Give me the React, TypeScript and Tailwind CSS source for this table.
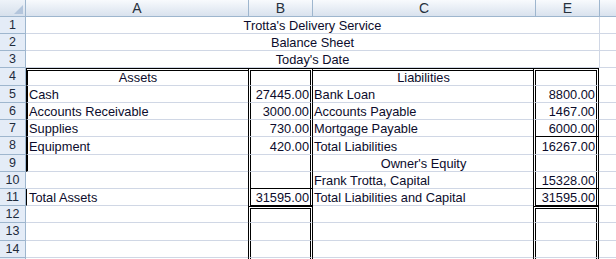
import React from "react";

const GB = "border-b border-b-[#d0d7e5]";
const BK = "border-b border-b-black";

function RowHead({ n }: { n?: number }) {
  return (
    <div className="w-[26px] shrink-0 h-full flex items-center justify-center bg-[#e4ecf7] border-r border-b border-[#9eb6ce] text-[12.5px] leading-none text-[#1e2b3c]">
      {n}
    </div>
  );
}

const base = "shrink-0 h-full flex items-end overflow-hidden whitespace-nowrap leading-[14px]";

function A({ cls, children }: { cls: string; children?: React.ReactNode }) {
  return <div className={`${base} w-[222px] ${cls}`}>{children}</div>;
}
function B({ cls, children }: { cls: string; children?: React.ReactNode }) {
  return (
    <div className={`${base} w-[65px] justify-end pr-[1px] border-double border-x-[3px] border-x-black ${cls}`}>
      {children}
    </div>
  );
}
function C({ cls, children }: { cls: string; children?: React.ReactNode }) {
  return <div className={`${base} w-[220px] pl-[1px] ${cls}`}>{children}</div>;
}
function E({ cls, children }: { cls: string; children?: React.ReactNode }) {
  return (
    <div className={`${base} w-[66px] justify-end pr-[1px] border-double border-x-[3px] border-x-black ${cls}`}>
      {children}
    </div>
  );
}
function F() {
  return <div className={`${base} w-[17px] ${GB}`} />;
}

function TitleRow({ n, text }: { n: number; text: string }) {
  return (
    <div className="flex h-[17px]">
      <RowHead n={n} />
      <div className={`${base} w-[574px] justify-center border-r border-r-[#d0d7e5] ${GB}`}>{text}</div>
      <div className={`${base} w-[16px] ${GB}`} />
    </div>
  );
}

export default function App() {
  return (
    <div className="w-[616px] h-[259px] overflow-hidden bg-white font-['Liberation_Sans',Arial,sans-serif] text-[12.8px] text-[#0c0c2c]">
      {/* column headers */}
      <div className="flex h-[17px]">
        <div className="w-[26px] shrink-0 h-full bg-linear-to-b from-[#eef3f9] to-[#d6e0ec] border-r border-b border-[#9eb6ce] flex">
          <svg width="25" height="16" viewBox="0 0 25 16">
            <polygon points="23,5 23,14 14,14" fill="#b3c5dc" />
          </svg>
        </div>
        <div className="w-[223px] shrink-0 h-full flex items-center justify-center bg-linear-to-b from-[#f8fafd] to-[#d9e2ee] border-r border-b border-[#9eb6ce] text-[14px] leading-none text-[#27313d]">A</div>
        <div className="w-[64px] shrink-0 h-full flex items-center justify-center bg-linear-to-b from-[#f8fafd] to-[#d9e2ee] border-r border-b border-[#9eb6ce] text-[14px] leading-none text-[#27313d]">B</div>
        <div className="w-[223px] shrink-0 h-full flex items-center justify-center bg-linear-to-b from-[#f8fafd] to-[#d9e2ee] border-r border-b border-[#9eb6ce] text-[14px] leading-none text-[#27313d]">C</div>
        <div className="w-[64px] shrink-0 h-full flex items-center justify-center bg-linear-to-b from-[#f8fafd] to-[#d9e2ee] border-r border-b border-[#9eb6ce] text-[14px] leading-none text-[#27313d]">E</div>
        <div className="w-[16px] shrink-0 h-full bg-linear-to-b from-[#f8fafd] to-[#d9e2ee] border-b border-[#9eb6ce]" />
      </div>

      <TitleRow n={1} text="Trotta's Delivery Service" />
      <TitleRow n={2} text="Balance Sheet" />
      <TitleRow n={3} text="Today's Date" />

      {/* row 4 */}
      <div className="flex h-[18px]">
        <RowHead n={4} />
        <A cls={`justify-center border-double border-t-[3px] border-t-black border-l-2 border-l-black ${GB}`}>Assets</A>
        <B cls={`border-t-[3px] border-t-black ${GB}`} />
        <C cls={`justify-center border-double border-t-[3px] border-t-black ${GB}`}>Liabilities</C>
        <E cls={`border-t-[3px] border-t-black ${GB}`} />
        <F />
      </div>
      {/* row 5 */}
      <div className="flex h-[17px]">
        <RowHead n={5} />
        <A cls={`pl-[1px] border-l-2 border-l-black ${GB}`}>Cash</A>
        <B cls={GB}>27445.00</B>
        <C cls={GB}>Bank Loan</C>
        <E cls={GB}>8800.00</E>
        <F />
      </div>
      {/* row 6 */}
      <div className="flex h-[17px]">
        <RowHead n={6} />
        <A cls={`pl-[1px] border-l-2 border-l-black ${GB}`}>Accounts Receivable</A>
        <B cls={GB}>3000.00</B>
        <C cls={GB}>Accounts Payable</C>
        <E cls={GB}>1467.00</E>
        <F />
      </div>
      {/* row 7 */}
      <div className="flex h-[17px]">
        <RowHead n={7} />
        <A cls={`pl-[1px] border-l-2 border-l-black ${GB}`}>Supplies</A>
        <B cls={GB}>730.00</B>
        <C cls={GB}>Mortgage Payable</C>
        <E cls={BK}>6000.00</E>
        <F />
      </div>
      {/* row 8 */}
      <div className="flex h-[18px]">
        <RowHead n={8} />
        <A cls={`pl-[1px] border-l-2 border-l-black ${GB}`}>Equipment</A>
        <B cls={GB}>420.00</B>
        <C cls={GB}>Total Liabilities</C>
        <E cls={GB}>16267.00</E>
        <F />
      </div>
      {/* row 9 */}
      <div className="flex h-[17px]">
        <RowHead n={9} />
        <A cls={`pl-[1px] border-l-2 border-l-black ${GB}`} />
        <B cls={GB} />
        <C cls={`justify-center ${GB}`}>Owner's Equity</C>
        <E cls={GB} />
        <F />
      </div>
      {/* row 10 */}
      <div className="flex h-[17px]">
        <RowHead n={10} />
        <A cls={GB} />
        <B cls={BK} />
        <C cls={GB}>Frank Trotta, Capital</C>
        <E cls={BK}>15328.00</E>
        <F />
      </div>
      {/* row 11 */}
      <div className="flex h-[17px]">
        <RowHead n={11} />
        <A cls={`pl-[2px] border-l border-l-black ${GB}`}>Total Assets</A>
        <B cls={BK}>31595.00</B>
        <C cls={GB}>Total Liabilities and Capital</C>
        <E cls={BK}>31595.00</E>
        <F />
      </div>
      {/* row 12 */}
      <div className="flex h-[17px]">
        <RowHead n={12} />
        <A cls={GB} />
        <B cls={`border-t-[3px] border-t-black ${GB}`} />
        <C cls={GB} />
        <E cls={`border-t-[3px] border-t-black ${GB}`} />
        <F />
      </div>
      {/* row 13 */}
      <div className="flex h-[18px]">
        <RowHead n={13} />
        <A cls={GB} />
        <B cls={GB} />
        <C cls={GB} />
        <E cls={GB} />
        <F />
      </div>
      {/* row 14 */}
      <div className="flex h-[17px]">
        <RowHead n={14} />
        <A cls={GB} />
        <B cls={GB} />
        <C cls={GB} />
        <E cls={GB} />
        <F />
      </div>
      {/* row 15 (only a sliver visible) */}
      <div className="flex h-[17px]">
        <RowHead />
        <A cls={GB} />
        <B cls={GB} />
        <C cls={GB} />
        <E cls={GB} />
        <F />
      </div>
    </div>
  );
}
